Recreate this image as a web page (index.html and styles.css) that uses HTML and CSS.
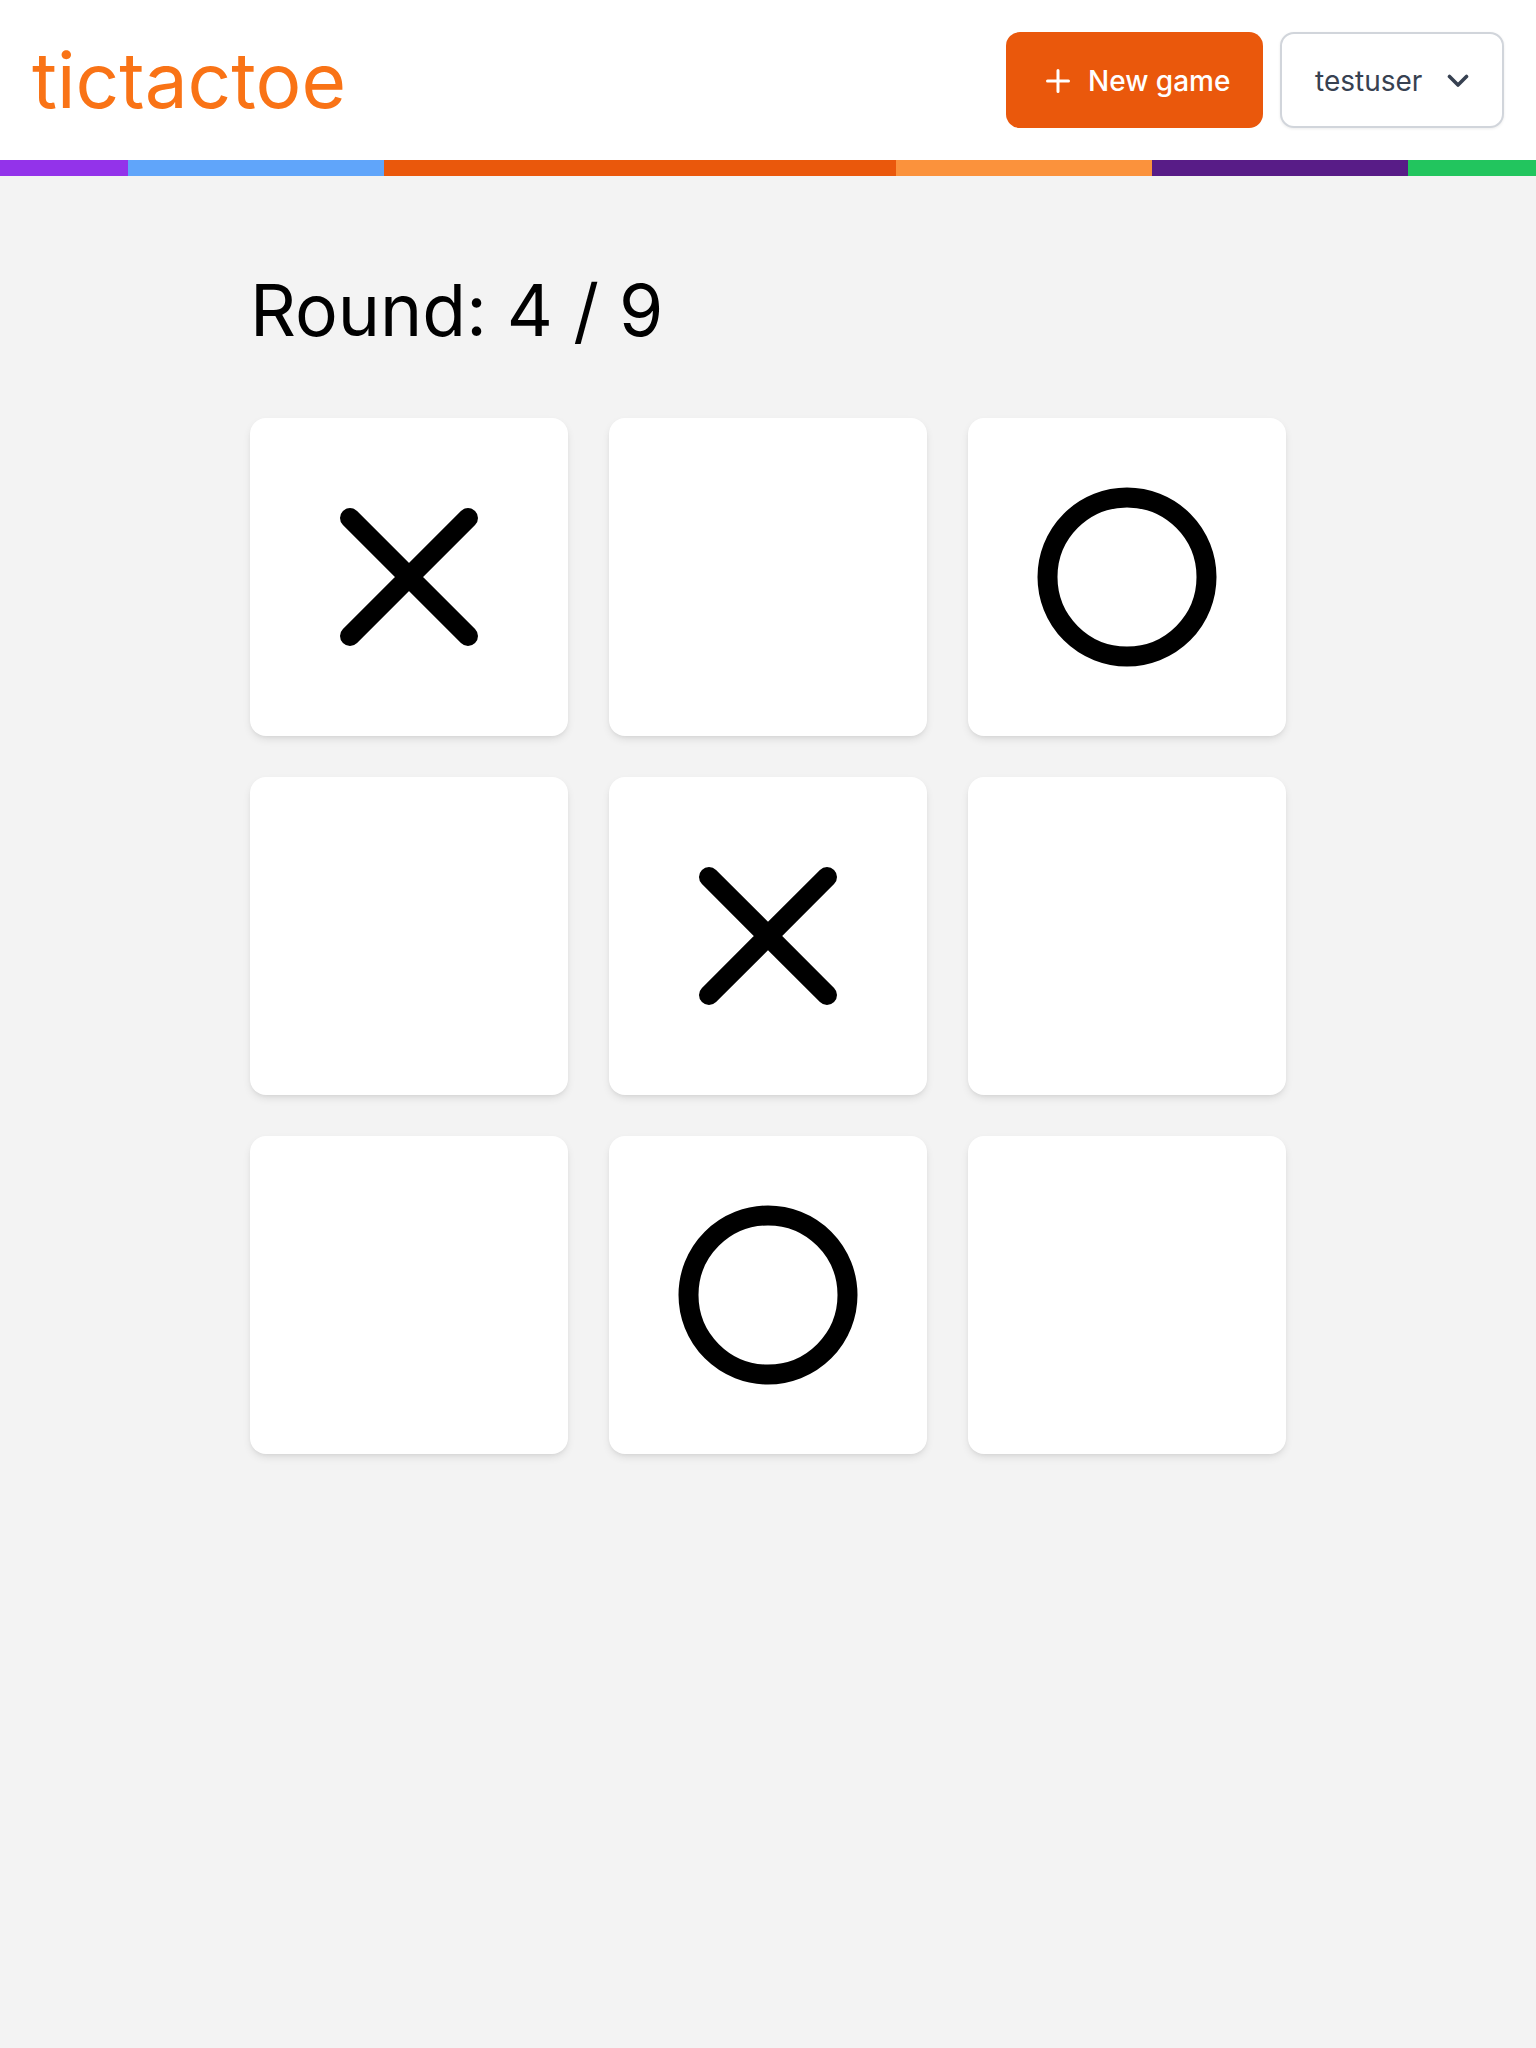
FILE: index.html
```html
<!DOCTYPE html>
<html lang="en">
<head>
<meta charset="utf-8">
<title>tictactoe</title>
<link rel="stylesheet" href="styles.css">
</head>
<body>
<header class="topbar">
  <div class="logo">tictactoe</div>
  <div class="actions">
    <button class="btn-new">
      <svg class="plus" width="24" height="24" viewBox="0 0 24 24"><path d="M12 1.5v21M1.5 12h21" stroke="#fff" stroke-width="3" stroke-linecap="round" fill="none"/></svg>
      <span>New game</span>
    </button>
    <button class="btn-user">
      <span>testuser</span>
      <svg class="chev" width="22" height="14" viewBox="0 0 22 14"><path d="M2.5 2.5l8.5 8.5 8.5-8.5" stroke="#374151" stroke-width="3.6" stroke-linecap="round" stroke-linejoin="round" fill="none"/></svg>
    </button>
  </div>
</header>
<div class="stripe">
  <span class="s s1"></span><span class="s s2"></span><span class="s s3"></span><span class="s s4"></span><span class="s s5"></span><span class="s s6"></span>
</div>
<main class="game">
  <h1 class="round">Round: 4 / 9</h1>
  <div class="board">
    <div class="cell"><svg viewBox="0 0 318 318"><path d="M100 100L218 218M218 100L100 218" stroke="#000" stroke-width="20" stroke-linecap="round" fill="none"/></svg></div>
    <div class="cell"></div>
    <div class="cell"><svg viewBox="0 0 318 318"><circle cx="159" cy="159" r="79.5" stroke="#000" stroke-width="20" fill="none"/></svg></div>
    <div class="cell"></div>
    <div class="cell"><svg viewBox="0 0 318 318"><path d="M100 100L218 218M218 100L100 218" stroke="#000" stroke-width="20" stroke-linecap="round" fill="none"/></svg></div>
    <div class="cell"></div>
    <div class="cell"></div>
    <div class="cell"><svg viewBox="0 0 318 318"><circle cx="159" cy="159" r="79.5" stroke="#000" stroke-width="20" fill="none"/></svg></div>
    <div class="cell"></div>
  </div>
</main>
</body>
</html>
```
FILE: styles.css
```css
* { box-sizing: border-box; }
html, body { margin: 0; padding: 0; }
body {
  background: #f3f3f3;
  font-family: Inter, "Noto Sans", sans-serif;
  min-height: 2048px;
}
.topbar {
  height: 160px;
  background: #fff;
  display: flex;
  align-items: center;
  justify-content: space-between;
  padding: 0 32px;
}
.logo {
  color: #f97316;
  font-size: 76.5px;
  line-height: 1;
  font-weight: 400;
  margin-top: 0;
}
.actions {
  display: flex;
  gap: 17px;
  align-items: center;
}
.btn-new {
  height: 96px;
  width: 257px;
  border: none;
  border-radius: 14px;
  background: #ea580c;
  color: #fff;
  font-family: inherit;
  font-size: 28px;
  font-weight: 500;
  display: flex;
  align-items: center;
  gap: 18px;
  padding: 2px 0 0 40px;
}
.btn-user {
  height: 96px;
  width: 224px;
  border: 2px solid #d1d5db;
  border-radius: 14px;
  background: #fff;
  color: #374151;
  font-family: inherit;
  font-size: 28px;
  font-weight: 400;
  display: flex;
  align-items: center;
  justify-content: space-between;
  padding: 2px 33px 0 33px;
  box-shadow: 0 1px 3px rgba(0,0,0,0.08);
}
.chev { margin-top: 0; }
.stripe {
  display: flex;
  height: 16px;
}
.s { height: 16px; }
.s1 { width: 128px; background: #9333ea; }
.s2 { width: 256px; background: #60a5fa; }
.s3 { width: 512px; background: #ea580c; }
.s4 { width: 256px; background: #fb923c; }
.s5 { width: 256px; background: #581c87; }
.s6 { width: 128px; background: #22c55e; }
.game {
  width: 1036px;
  margin: 0 auto;
  padding-top: 99px;
}
.round {
  margin: 0;
  font-size: 71.5px;
  font-weight: 400;
  line-height: 1;
  color: #000;
}
.board {
  margin-top: 71px;
  display: grid;
  grid-template-columns: repeat(3, 318px);
  grid-auto-rows: 318px;
  gap: 41px;
}
.cell {
  background: #fff;
  border-radius: 16px;
  box-shadow: 0 4px 8px -1px rgba(0,0,0,0.1), 0 2px 4px -2px rgba(0,0,0,0.08);
}
.cell svg { display: block; width: 318px; height: 318px; }
```
